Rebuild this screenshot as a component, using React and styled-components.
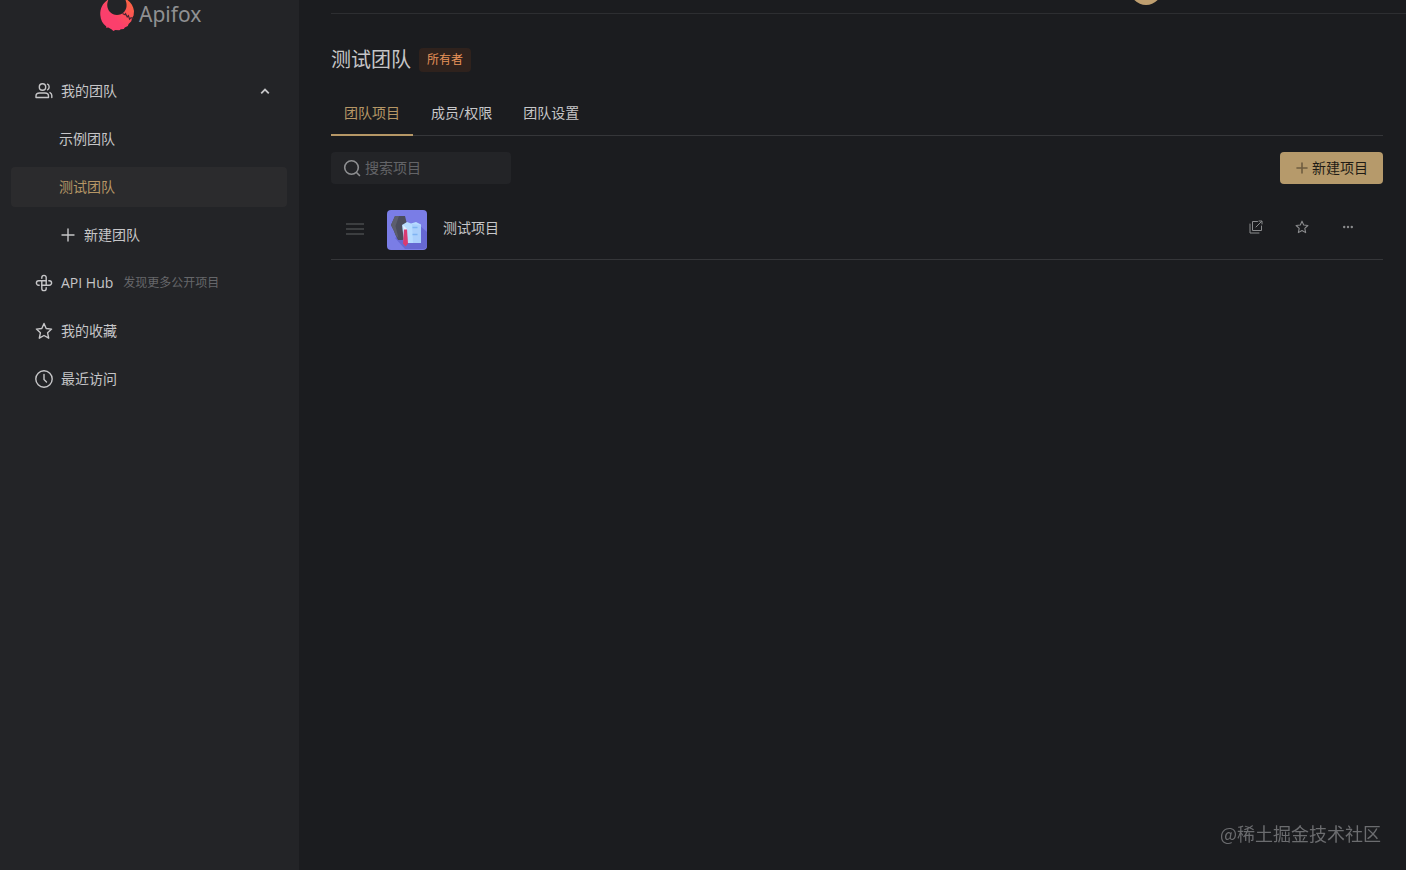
import styled, { createGlobalStyle } from 'styled-components';

const GlobalStyle = createGlobalStyle`
  * {
    box-sizing: border-box;
  }

  body {
    margin: 0;
    background: #1b1c1f;
    color: #c6c6c8;
    font-family: 'Open Sans', 'Noto Sans CJK SC', sans-serif;
    font-size: 14px;
    line-height: 20px;
  }

  button,
  input {
    font: inherit;
  }
`;

const Page = styled.div`
  display: flex;
  min-height: 100vh;
`;

const Sidebar = styled.aside`
  flex: 0 0 299px;
  padding: 0 12px 24px 11px;
  background: #232427;
`;

const Brand = styled.a`
  display: flex;
  align-items: flex-start;
  gap: 4px;
  height: 32px;
  margin: 0 0 39px 89px;
  color: #8f9092;
  font-family: 'Noto Sans', 'Open Sans', sans-serif;
  font-size: 21px;
  line-height: 28px;
  text-decoration: none;
`;

const Menu = styled.ul`
  display: flex;
  flex-direction: column;
  gap: 8px;
  margin: 0;
  padding: 0;
  list-style: none;
`;

const menuItem = `
  display: flex;
  align-items: center;
  width: 100%;
  height: 40px;
  border: 0;
  border-radius: 4px;
  text-align: left;
  text-decoration: none;
  cursor: pointer;
`;

const MenuButton = styled.button`
  ${menuItem}
  gap: 8px;
  padding: 0 16px 0 ${({ $nested }) => ($nested ? '49px' : '24px')};
  background: none;
  color: inherit;
`;

const MenuLink = styled.a`
  ${menuItem}
  gap: 8px;
  padding: 0 16px 0 ${({ $nested }) => ($nested ? '48px' : '24px')};
  background: ${({ $active }) => ($active ? '#2b2b2d' : 'none')};
  color: ${({ $active }) => ($active ? '#b69766' : 'inherit')};
`;

const Chevron = styled.svg`
  margin-left: auto;
`;

const Hint = styled.small`
  margin-left: 2px;
  color: #66676a;
  font-size: 12px;
`;

const Main = styled.main`
  flex: 1;
  min-width: 0;
  padding-left: 32px;
`;

const TopBar = styled.header`
  display: flex;
  align-items: flex-end;
  justify-content: flex-end;
  height: 14px;
  padding: 0 244px 8px 0;
  border-bottom: 1px solid #2d2e31;
  overflow: hidden;
`;

const Avatar = styled.span`
  flex: none;
  width: 32px;
  height: 32px;
  border-radius: 50%;
  background: #bf9f70;
`;

const Content = styled.div`
  padding: 30px 23px 0 0;
`;

const TitleRow = styled.div`
  display: flex;
  align-items: center;
  gap: 8px;
`;

const Title = styled.h1`
  margin: 0;
  font-size: 20px;
  font-weight: 400;
  line-height: 32px;
`;

const Tag = styled.span`
  padding: 2px 8px;
  border-radius: 4px;
  background: #2f221d;
  color: #e8935a;
  font-size: 12px;
`;

const Tabs = styled.div`
  display: flex;
  gap: 5px;
  margin: 16px 0;
  border-bottom: 1px solid #353639;
`;

const Tab = styled.button`
  height: 44px;
  margin-bottom: -1px;
  padding: 0 13px;
  border: 0;
  border-bottom: 2px solid ${({ $active }) => ($active ? '#b69766' : 'transparent')};
  background: none;
  color: ${({ $active }) => ($active ? '#b69766' : 'inherit')};
  cursor: pointer;
`;

const Toolbar = styled.div`
  display: flex;
  align-items: center;
  justify-content: space-between;
`;

const SearchBox = styled.label`
  display: flex;
  align-items: center;
  gap: 4px;
  width: 180px;
  height: 32px;
  padding: 0 12px;
  border-radius: 4px;
  background: #232427;
  color: #8e8f91;
`;

const SearchInput = styled.input`
  flex: 1;
  min-width: 0;
  padding: 0;
  border: 0;
  outline: 0;
  background: none;
  color: #c6c6c8;

  &::placeholder {
    color: #636467;
    opacity: 1;
  }
`;

const CreateButton = styled.button`
  display: flex;
  align-items: center;
  gap: 4px;
  height: 32px;
  padding: 0 15px 0 16px;
  border: 0;
  border-radius: 4px;
  background: #b69a6b;
  color: #1f1c16;
  cursor: pointer;

  svg {
    color: #6f5d40;
  }
`;

const ProjectList = styled.ul`
  margin: 16px 0 0;
  padding: 0;
  list-style: none;
`;

const ProjectRow = styled.li`
  display: flex;
  align-items: flex-start;
  height: 60px;
  padding: 10px 23px 0 15px;
  border-bottom: 1px solid #353639;
`;

const Handle = styled.svg`
  margin: 12px 23px 0 0;
  color: #48494c;
`;

const ProjectName = styled.a`
  margin-left: 16px;
  color: inherit;
  line-height: 36px;
  text-decoration: none;
`;

const Actions = styled.div`
  display: flex;
  align-items: center;
  gap: 22px;
  height: 34px;
  margin-left: auto;
`;

const IconButton = styled.button`
  display: flex;
  align-items: center;
  justify-content: center;
  width: 24px;
  height: 24px;
  padding: 0;
  border: 0;
  background: none;
  color: #8a8b8d;
  cursor: pointer;
`;

const Watermark = styled.div`
  position: fixed;
  right: 25px;
  bottom: 24px;
  color: #6b6c6f;
  font-family: 'Noto Sans CJK SC', sans-serif;
  font-size: 18px;
  line-height: 26px;
`;

function Icon({ size = 18, box = 18, width = 1.4, children, ...rest }) {
  return (
    <svg
      width={size}
      height={size}
      viewBox={`0 0 ${box} ${box}`}
      fill="none"
      stroke="currentColor"
      strokeWidth={width}
      strokeLinecap="round"
      strokeLinejoin="round"
      aria-hidden="true"
      {...rest}
    >
      {children}
    </svg>
  );
}

const STAR =
  'M9 1.5l2.2 5 5.4.6-4 3.7 1.1 5.4L9 13.5l-4.7 2.7 1.1-5.4-4-3.7 5.4-.6z';

function FoxLogo() {
  return (
    <svg width="35" height="32" viewBox="0 0 35 32" aria-hidden="true">
      <defs>
        <linearGradient id="fox" x1="0" y1="1" x2="1" y2="0">
          <stop offset="0.4" stopColor="#fb3f6c" />
          <stop offset="1" stopColor="#fb6a3c" />
        </linearGradient>
      </defs>
      <path
        d="M7.500 0C2.500 3.500 0 8.500.3 15c.3 5 2.500 9 6 11.500l-.2 1.200 2.200-.2 3.500 2 1.500 1.500 2-1 4 .3 1.500-1 3-.2 1-1.500 3-1.600.8-2.100 2.700-2.600.7-3 1.600-2.800L34 11C33.400 6.500 31.200 2.500 27.500 0H25.500c1.800 4.500 1.300 8.800-1.200 11.700-3.800 4.300-10.600 4.400-14.300.3C7 8.600 6.500 4.300 8.300 0z"
        fill="url(#fox)"
      />
      <path
        d="M22.500 13.500l2.500 1.300.6-1 1.600 3.200 1.200-1.400 1.200 3.600 1.500-1.500 2.400 1"
        fill="none"
        stroke="#4a2430"
        strokeWidth="1.200"
      />
    </svg>
  );
}

function ProjectIcon() {
  return (
    <svg width="40" height="40" viewBox="0 0 40 40" aria-hidden="true">
      <rect width="40" height="40" rx="4" fill="#7a7de6" />
      <path d="M8 28L18 39H36a4 4 0 0 0 4-4V22L31 14z" fill="#6668d2" />
      <path d="M8 6H18l1.500 6v15l-4 3H11l-2.500-5-1.500-4-3-6z" fill="#4b4d5c" />
      <path d="M8 6h4L8.500 16l3 12-3-3-1.500-4-3-6z" fill="#5c5e6d" />
      <path d="M15 15l5-3 4 1.500 5-1.500 5 2.500V33H17l-1-10z" fill="#b7dcff" />
      <path d="M25 14l8 1 1 1v17h-8z" fill="#abd0fc" />
      <path d="M25.500 17.500h5M25.500 24.500h5" stroke="#7fb4f2" strokeWidth="1.500" />
      <path d="M16 15l4 4-3 3z" fill="#e1f1ff" />
      <path d="M17 19.500h3l1 14-2.500 3L16 33.500z" fill="#d93b72" />
    </svg>
  );
}

function App() {
  return (
    <>
      <GlobalStyle />
      <Page>
        <Sidebar>
          <Brand href="#">
            <FoxLogo />
            Apifox
          </Brand>
          <nav>
            <Menu>
              <li>
                <MenuButton type="button" aria-expanded="true">
                  <Icon>
                    <circle cx="7.5" cy="5" r="3.200" />
                    <path d="M1 15.500v-1.500c0-2 1.500-3 3.500-3h5.500c2 0 3.500 1 3.500 3v1.500z" />
                    <path d="M12.500 2.200c2.200 1 2.200 4.600 0 5.600M15 10.600c1.300.6 1.800 1.600 1.800 3v2" />
                  </Icon>
                  我的团队
                  <Chevron width="12" height="12" viewBox="0 0 12 12" fill="none" stroke="currentColor" strokeWidth="1.800">
                    <path d="M2.200 8.300L6 4.500l3.800 3.800" />
                  </Chevron>
                </MenuButton>
              </li>
              <li>
                <MenuLink href="#" $nested>
                  示例团队
                </MenuLink>
              </li>
              <li>
                <MenuLink href="#" $nested $active>
                  测试团队
                </MenuLink>
              </li>
              <li>
                <MenuButton type="button" $nested>
                  <Icon size={16} box={16}>
                    <path d="M8 2v12M2 8h12" />
                  </Icon>
                  新建团队
                </MenuButton>
              </li>
              <li>
                <MenuLink href="#">
                  <Icon>
                    <path d="M6.800 4.200V3.600a2.200 2.200 0 0 1 4.400 0v7.600" />
                    <path d="M13.800 6.800h.6a2.200 2.200 0 0 1 0 4.400H6.800" />
                    <path d="M11.200 13.800v.6a2.200 2.200 0 0 1-4.400 0V6.800" />
                    <path d="M4.200 11.200h-.6a2.200 2.200 0 0 1 0-4.400h7.600" />
                  </Icon>
                  API Hub
                  <Hint>发现更多公开项目</Hint>
                </MenuLink>
              </li>
              <li>
                <MenuLink href="#">
                  <Icon>
                    <path d={STAR} />
                  </Icon>
                  我的收藏
                </MenuLink>
              </li>
              <li>
                <MenuLink href="#">
                  <Icon>
                    <circle cx="9" cy="9" r="8.200" />
                    <path d="M9 4.500v5l2.500 2.500" />
                  </Icon>
                  最近访问
                </MenuLink>
              </li>
            </Menu>
          </nav>
        </Sidebar>

        <Main>
          <TopBar>
            <Avatar />
          </TopBar>
          <Content>
            <TitleRow>
              <Title>测试团队</Title>
              <Tag>所有者</Tag>
            </TitleRow>

            <Tabs role="tablist">
              <Tab type="button" role="tab" aria-selected="true" $active>
                团队项目
              </Tab>
              <Tab type="button" role="tab" aria-selected="false">
                成员/权限
              </Tab>
              <Tab type="button" role="tab" aria-selected="false">
                团队设置
              </Tab>
            </Tabs>

            <Toolbar>
              <SearchBox>
                <Icon width={1.6}>
                  <circle cx="8.500" cy="8.500" r="6.800" />
                  <path d="M13.500 13.500l3 3" />
                </Icon>
                <SearchInput type="search" aria-label="搜索项目" placeholder="搜索项目" />
              </SearchBox>
              <CreateButton type="button">
                <Icon size={12} box={12} width={1.6}>
                  <path d="M6 1v10M1 6h10" />
                </Icon>
                新建项目
              </CreateButton>
            </Toolbar>

            <ProjectList>
              <ProjectRow>
                <Handle width="18" height="14" viewBox="0 0 18 14" stroke="currentColor" strokeWidth="1.500">
                  <path d="M0 2h18M0 7h18M0 12h18" />
                </Handle>
                <ProjectIcon />
                <ProjectName href="#">测试项目</ProjectName>
                <Actions>
                  <IconButton type="button" aria-label="打开">
                    <Icon size={14} box={14} width={1}>
                      <path d="M8.500 1.500H3.500v9h9V6" />
                      <path d="M1 4v9h9" />
                      <path d="M7 7l5.500-5.500M10 1h3v3" />
                    </Icon>
                  </IconButton>
                  <IconButton type="button" aria-label="收藏">
                    <Icon size={14} width={1.4}>
                      <path d={STAR} />
                    </Icon>
                  </IconButton>
                  <IconButton type="button" aria-label="更多">
                    <svg width="12" height="12" viewBox="0 0 12 12" fill="currentColor" aria-hidden="true">
                      <circle cx="2.200" cy="6" r="1.200" />
                      <circle cx="6" cy="6" r="1.200" />
                      <circle cx="9.800" cy="6" r="1.200" />
                    </svg>
                  </IconButton>
                </Actions>
              </ProjectRow>
            </ProjectList>
          </Content>
        </Main>
      </Page>
      <Watermark>@稀土掘金技术社区</Watermark>
    </>
  );
}

export default App;
